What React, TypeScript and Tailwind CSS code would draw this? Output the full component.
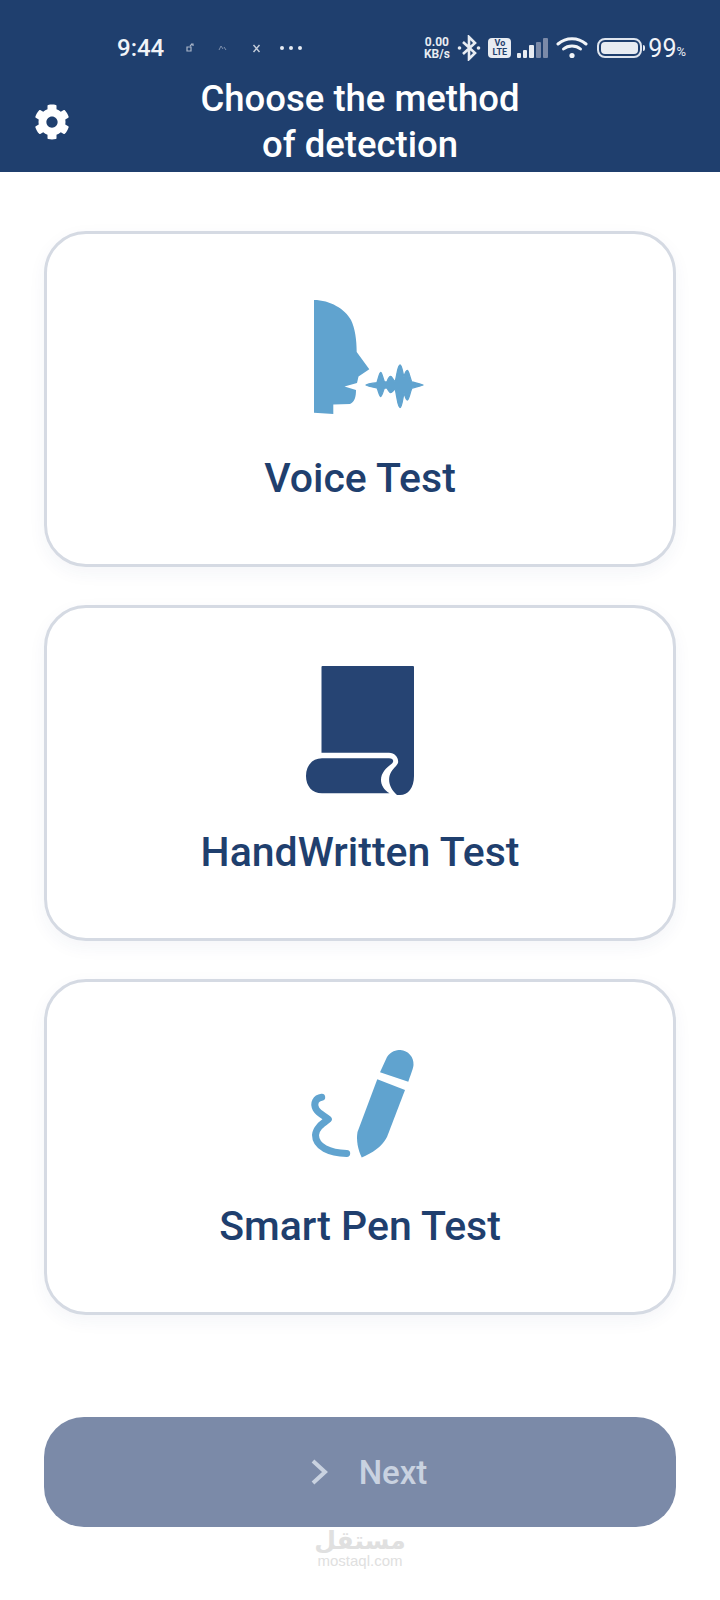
import React from 'react';
import { FaCog } from 'react-icons/fa';

const VoiceIcon = () => (
  <svg width="160" height="150" viewBox="280 276 160 150" className="block" fill="#60a3cf">
    <path d="M314 300 C330 300 345 309 351 320 C355 328 356.7 340 356.7 352 L369.3 369.3 L358.5 376.5 L357 383 L344.5 386.5 L356 390 C356 396 355 402 350 404 L333.3 404.5 L333.3 414 L314 412.7 Z" />
    <path
      d="M366 385 C370 383 374 383.5 377 382.5 C378.5 378 379.5 372.5 380.7 372.5 C382 372.5 383 379 384.5 382 L387 382 C388 379 389.5 376.5 390.7 376.5 C392 376.5 393 380 395 381.5 C396.5 379 397.5 365 400 365 C402 365 403 375 404 377 C405 373 406 370.5 407.3 370.5 C409 370.5 410 379 412 382 C416 383 419 383.5 423 385 C419 386.5 416 387 412 388 C410 392 409 400 407.3 400 C406 400 405 396 404 393 C403 396 402 407.5 400 407.5 C397.5 407.5 396.5 392 395 389 C393.5 390 392 392.7 390.7 392.7 C389.5 392.7 388 390 387 388 L384.5 388 C383 391 382 396.5 380.7 396.5 C379.5 396.5 378.5 391 377 388 C374 387 370 387 366 385 Z"
      stroke="#60a3cf"
      strokeWidth="1.3"
      strokeLinejoin="round"
    />
  </svg>
);

const ScrollIcon = () => (
  <svg width="160" height="150" viewBox="280 650 160 150" className="block" fill="#264473">
    <path d="M321.5 667 Q321.5 666 322.5 666 H413 Q414 666 414 667 V776 C414 788 408 795 400 795 L397 795 C391 790 388 783 389.5 776 C391 770 396 767 398 763 C399 758 395 752.7 389 752.7 H321.5 Z" />
    <path d="M322 758.3 H389 C393 758.3 394.5 761 392 763.5 C386 768 381 773 381 780 C381 785 384 790 389.5 793.3 H322 C312 793.3 306 786 306 776 C306 766 312 758.3 322 758.3 Z" />
  </svg>
);

const PenIcon = () => (
  <svg width="160" height="150" viewBox="280 1024 160 150" className="block" fill="#60a3cf">
    <path d="M380 1072.3 L387 1057 C391 1051 396 1050 400.5 1050 C408 1050.5 414 1057 413.5 1065 C413 1069 412 1071 408.3 1081.7 Z" />
    <path d="M377.3 1079.3 L405 1090 L387 1137 C382 1147 372 1153 361.7 1157.5 C358 1150 356 1140 357.5 1132 Z" />
    <path
      d="M321.7 1097.3 C316 1098 313 1103 316 1109 C319 1114 325 1116 328.3 1119.3 C322 1124 316 1128 315.5 1135 C315.5 1147 330 1153 346.7 1153.5"
      fill="none"
      stroke="#60a3cf"
      strokeWidth="7"
      strokeLinecap="round"
      strokeLinejoin="round"
    />
  </svg>
);

const TestCard: React.FC<{ icon: React.ReactNode; title: string }> = ({ icon, title }) => (
  <div className="h-[336px] rounded-[42px] border-[3px] border-[#d5dae3] bg-white shadow-[0_6px_18px_rgba(30,60,110,0.05)] flex flex-col items-center pt-[42px]">
    {icon}
    <div className="mt-[29px] text-[41px] leading-[46px] font-medium text-[#1f3f6e]">{title}</div>
  </div>
);

const StatusBar = () => (
  <div className="h-[34px] pl-[117px] pr-[34px] flex items-center justify-between text-white">
    <div className="flex items-center">
      <span className="text-[24px] leading-none font-medium text-[#f1f4f8]">9:44</span>
      <svg width="10" height="10" viewBox="0 0 10 10" className="ml-[21px]" fill="none" stroke="#aab6c9" strokeWidth="1.2">
        <path d="M2 4h4v4H2z M5 3l2-2 M6 1h2v2" />
      </svg>
      <svg width="10" height="8" viewBox="0 0 10 8" className="ml-[23px]" fill="none" stroke="#7e90ad" strokeWidth="1">
        <path d="M1 6 L3 2 L5 5 M6 3 L8 6" />
      </svg>
      <svg width="9" height="9" viewBox="0 0 9 9" className="ml-[24px]" fill="none" stroke="#c3ccd9" strokeWidth="1.4">
        <path d="M1.5 1 L7.5 8 M7.5 1 L1.5 8" />
      </svg>
      <div className="ml-[19px] flex gap-[5px]">
        <span className="w-[4px] h-[4px] rounded-full bg-[#e8ecf2]" />
        <span className="w-[4px] h-[4px] rounded-full bg-[#e8ecf2]" />
        <span className="w-[4px] h-[4px] rounded-full bg-[#e8ecf2]" />
      </div>
    </div>
    <div className="flex items-center">
      <div className="text-[12px] leading-[12px] font-bold text-center text-[#e8ecf2] w-[29px]">
        <div>0.00</div>
        <div>KB/s</div>
      </div>
      <svg width="24" height="26" viewBox="0 0 24 26" className="ml-[6px]" fill="none" stroke="#e8ecf2" strokeWidth="2.6">
        <path d="M6 7 L18 18 L12 24 V2 L18 8 L6 19" />
        <circle cx="2.5" cy="13" r="1.8" fill="#e8ecf2" stroke="none" />
        <circle cx="21.5" cy="13" r="1.8" fill="#e8ecf2" stroke="none" />
      </svg>
      <div className="ml-[7px] w-[23px] h-[20px] rounded-[4px] bg-[#e8ecf2] text-[#1f3f6e] text-[9px] leading-[9px] font-bold text-center pt-[1px]">
        <div>Vo</div>
        <div>LTE</div>
      </div>
      <div className="ml-[6px] flex items-end gap-[2px] h-[20px]">
        <span className="w-[4px] h-[5px] rounded-[1px] bg-[#e8ecf2]" />
        <span className="w-[4px] h-[8px] rounded-[1px] bg-[#e8ecf2]" />
        <span className="w-[5px] h-[13px] rounded-[1px] bg-[#e8ecf2]" />
        <span className="w-[5px] h-[16px] rounded-[1px] bg-[#7b8aa8]" />
        <span className="w-[5px] h-[20px] rounded-[1px] bg-[#7b8aa8]" />
      </div>
      <svg width="32" height="22" viewBox="0 0 32 22" className="ml-[8px]" fill="none" stroke="#f1f4f8" strokeWidth="3" strokeLinecap="round">
        <path d="M2 7 C10 0 22 0 30 7" />
        <path d="M7.5 12 C12 8 20 8 24.5 12" />
        <circle cx="16" cy="18.5" r="2.6" fill="#f1f4f8" stroke="none" />
      </svg>
      <div className="ml-[9px] flex items-center">
        <div className="w-[45px] h-[20px] rounded-[8px] border-[2px] border-[#dfe5ee] p-[2px]">
          <div className="w-full h-full rounded-[4px] bg-[#e8ecf2]" />
        </div>
        <div className="ml-[1px] w-[2px] h-[6px] rounded-r-sm bg-[#e8ecf2]" />
      </div>
      <span className="ml-[3px] text-[25px] leading-none text-[#f1f4f8]">99</span>
      <span className="mt-[6px] text-[13px] leading-none text-[#e8ecf2]">%</span>
    </div>
  </div>
);

export default function App() {
  return (
    <div className="w-[720px] h-[1600px] overflow-hidden bg-white font-['Roboto',sans-serif]">
      <header className="h-[172px] bg-[#1f3f6e] pt-[31px]">
        <StatusBar />
        <div className="mt-[11px] grid grid-cols-[1fr_auto_1fr] items-center">
          <div className="pl-[34px]">
            <FaCog className="text-white w-[36px] h-[36px]" />
          </div>
          <h1 className="text-[36.5px] leading-[46px] font-medium text-white text-center">
            Choose the method
            <br />
            of detection
          </h1>
          <div />
        </div>
      </header>

      <main className="px-[44px] pt-[59px]">
        <div className="flex flex-col gap-[38px]">
          <TestCard icon={<VoiceIcon />} title="Voice Test" />
          <TestCard icon={<ScrollIcon />} title="HandWritten Test" />
          <TestCard icon={<PenIcon />} title="Smart Pen Test" />
        </div>

        <button className="mt-[102px] w-full h-[110px] rounded-[40px] bg-[#7b8aa8] flex items-center justify-center pl-[18px] text-[#c9d2e0]">
          <svg width="18" height="26" viewBox="0 0 18 26" fill="none" stroke="#c9d2e0" strokeWidth="4">
            <path d="M2 2 L14 13 L2 24" />
          </svg>
          <span className="ml-[30px] text-[33px] leading-none font-medium">Next</span>
        </button>

        <div className="mt-[2px] flex flex-col items-center text-[#e0e0e0]">
          <div className="font-['DejaVu_Sans',sans-serif] font-bold text-[25px] leading-[24px]" dir="rtl">مستقل</div>
          <div className="font-['Liberation_Sans',sans-serif] text-[15px] leading-[16px]">mostaql.com</div>
        </div>
      </main>
    </div>
  );
}
